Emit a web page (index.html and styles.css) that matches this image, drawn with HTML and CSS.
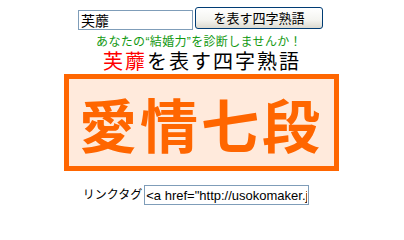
FILE: index.html
```html
<!DOCTYPE html>
<html lang="ja">
<head>
<meta charset="utf-8">
<link rel="stylesheet" href="styles.css">
</head>
<body>
<div class="page">
  <form class="search">
    <input class="name" type="text" value="芙蘼">
    <button class="go" type="button">を表す四字熟語</button>
  </form>
  <p class="lead">あなたの“結婚力”を診断しませんか！</p>
  <h1 class="title"><span class="who">芙蘼</span>を表す四字熟語</h1>
  <div class="result">愛情七段</div>
  <div class="link">
    <span class="label">リンクタグ</span>
    <input class="tag" type="text" value="<a href=&quot;http://usokomaker.jp/yoji/&quot;>">
  </div>
</div>
</body>
</html>
```
FILE: styles.css
```css
html, body {
  margin: 0;
  padding: 0;
  background: #ffffff;
}
body {
  width: 404px;
  height: 224px;
  overflow: hidden;
  font-family: "Liberation Sans", "Noto Sans CJK JP", sans-serif;
}
.page {
  display: flex;
  flex-direction: column;
  align-items: center;
  padding-top: 7px;
}
.search {
  display: flex;
  align-items: flex-start;
  gap: 2px;
  margin: 0 0 0 -3px;
}
.name {
  box-sizing: border-box;
  width: 115px;
  height: 20px;
  margin-top: 3px;
  padding: 0 2px;
  border: 1px solid #7f9db9;
  font-family: "Noto Sans CJK JP", sans-serif;
  font-size: 14px;
  line-height: 18px;
  color: #000;
  outline: none;
}
.go {
  box-sizing: border-box;
  width: 128px;
  height: 22px;
  padding: 0;
  border: 1px solid #003c74;
  border-radius: 3px;
  background: linear-gradient(#ffffff 0%, #f4f4f0 60%, #dcdad0 100%);
  font-family: "Noto Sans CJK JP", sans-serif;
  font-size: 13px;
  line-height: 18px;
  color: #000;
}
.lead {
  margin: 5px 0 0 -6px;
  font-family: "Liberation Sans", "Noto Sans CJK JP", sans-serif;
  font-size: 12px;
  line-height: 14px;
  letter-spacing: 0.35px;
  color: #129912;
}
.title {
  margin: 1px 0 0 0;
  font-family: "Liberation Sans", "Noto Sans CJK JP", sans-serif;
  font-size: 20px;
  line-height: 24px;
  font-weight: normal;
  letter-spacing: 2px;
  color: #000;
}
.who {
  color: #ff0000;
}
.result {
  box-sizing: border-box;
  width: 275px;
  height: 97px;
  margin: 0 0 0 -2px;
  border: 5px solid #ff6600;
  background: #ffeadc;
  display: flex;
  align-items: center;
  justify-content: center;
  font-family: "Noto Sans CJK JP", sans-serif;
  font-size: 58px;
  font-weight: bold;
  letter-spacing: 3px;
  color: #ff6600;
}
.link {
  display: flex;
  align-items: center;
  gap: 2px;
  margin: 14px 0 0 -12px;
}
.label {
  font-family: "Liberation Sans", "Noto Sans CJK JP", sans-serif;
  font-size: 12px;
  line-height: 20px;
  color: #000;
}
.tag {
  box-sizing: border-box;
  width: 165px;
  height: 20px;
  padding: 0 1px;
  border: 1px solid #7f9db9;
  font-family: "Liberation Sans", "Noto Sans CJK JP", sans-serif;
  font-size: 13px;
  line-height: 18px;
  color: #000;
  outline: none;
}
```
